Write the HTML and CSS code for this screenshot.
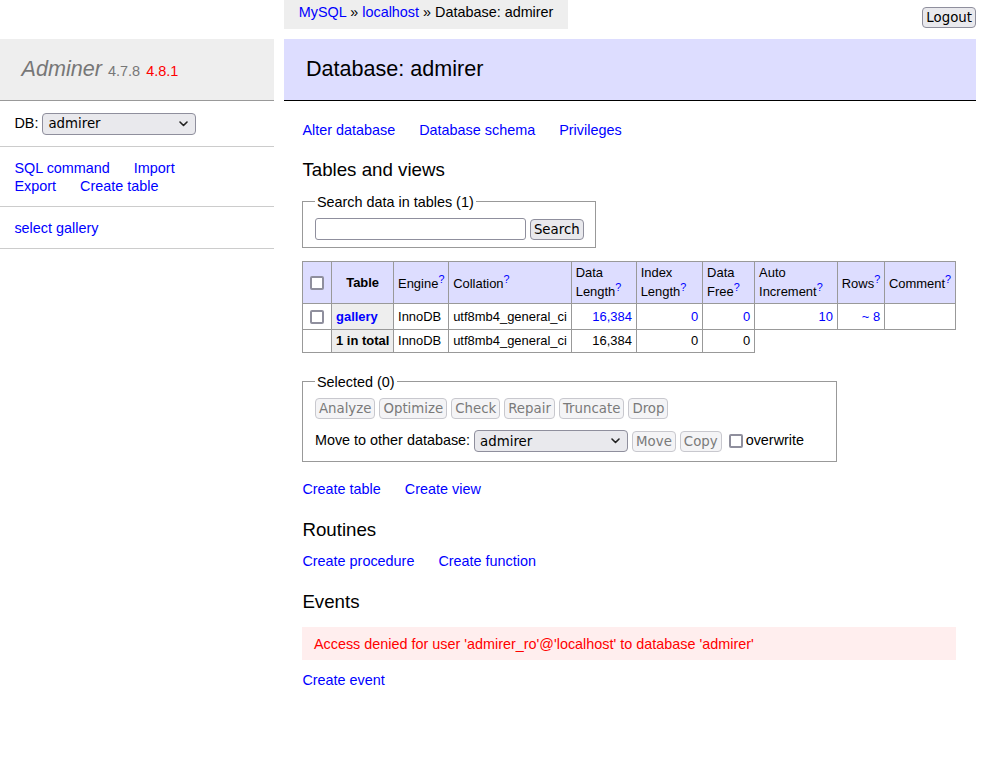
FILE: index.html
```html
<!DOCTYPE html>
<html lang="en">
<head>
<meta charset="utf-8">
<title>Database: admirer - Adminer</title>
<link rel="stylesheet" href="styles.css">
</head>
<body>
<div id="content">
<p id="breadcrumb"><a href="#">MySQL</a> &raquo; <a href="#">localhost</a> &raquo; Database: admirer</p>
<h2>Database: admirer</h2>
<p class="links"><a href="#">Alter database</a>
<a href="#">Database schema</a>
<a href="#">Privileges</a></p>
<h3>Tables and views</h3>
<form action="" method="post">
<fieldset><legend>Search data in tables <span>(1)</span></legend><div><input type="search" name="query" value=""> <input type="submit" value="Search"></div></fieldset>
<div class="scrollable">
<table class="nowrap checkable">
<thead><tr class="wrap"><td><input type="checkbox"></td><th>Table</th><td>Engine<sup><a href="#" class="help">?</a></sup></td><td>Collation<sup><a href="#" class="help">?</a></sup></td><td>Data Length<sup><a href="#" class="help">?</a></sup></td><td>Index Length<sup><a href="#" class="help">?</a></sup></td><td>Data Free<sup><a href="#" class="help">?</a></sup></td><td>Auto Increment<sup><a href="#" class="help">?</a></sup></td><td>Rows<sup><a href="#" class="help">?</a></sup></td><td>Comment<sup><a href="#" class="help">?</a></sup></td></tr></thead>
<tbody>
<tr><td><input type="checkbox"></td><th><a href="#">gallery</a></th><td>InnoDB</td><td>utf8mb4_general_ci</td><td class="number"><a href="#">16,384</a></td><td class="number"><a href="#">0</a></td><td class="number"><a href="#">0</a></td><td class="number"><a href="#">10</a></td><td class="number"><a href="#">~ 8</a></td><td></td></tr>
<tr><td></td><th>1 in total</th><td>InnoDB</td><td>utf8mb4_general_ci</td><td class="number">16,384</td><td class="number">0</td><td class="number">0</td></tr>
</tbody>
</table>
</div>
<div class="footer"><div>
<fieldset><legend>Selected <span>(0)</span></legend><div>
<input type="submit" value="Analyze" disabled> <input type="submit" value="Optimize" disabled> <input type="submit" value="Check" disabled> <input type="submit" value="Repair" disabled> <input type="submit" value="Truncate" disabled> <input type="submit" value="Drop" disabled>
<p class="move">Move to other database: <span class="sel"><select><option>admirer</option></select><svg class="chev" width="9" height="6" viewBox="0 0 9 6"><polyline points="1,1 4.5,4.5 8,1" fill="none" stroke="#222" stroke-width="1.6" stroke-linecap="round" stroke-linejoin="round"/></svg></span> <input type="submit" value="Move" disabled> <input type="submit" value="Copy" disabled> <label><input type="checkbox">overwrite</label></p>
</div></fieldset>
</div></div>
</form>
<p class="links"><a href="#">Create table</a>
<a href="#">Create view</a></p>
<h3>Routines</h3>
<p class="links"><a href="#">Create procedure</a>
<a href="#">Create function</a></p>
<h3>Events</h3>
<div class="error">Access denied for user 'admirer_ro'@'localhost' to database 'admirer'</div>
<p class="links"><a href="#">Create event</a></p>
</div>

<form action="" method="post">
<p class="logout"><input type="submit" value="Logout"></p>
</form>

<div id="menu">
<h1><a href="#" id="h1">Adminer</a> <span class="version">4.7.8</span> <a href="#" id="version">4.8.1</a></h1>
<form action=""><p id="dbs">DB: <span class="sel"><select><option>admirer</option></select><svg class="chev" width="9" height="6" viewBox="0 0 9 6"><polyline points="1,1 4.5,4.5 8,1" fill="none" stroke="#222" stroke-width="1.6" stroke-linecap="round" stroke-linejoin="round"/></svg></span></p></form>
<p class="links"><a href="#">SQL command</a>
<a href="#">Import</a>
<a href="#">Export</a>
<a href="#">Create table</a></p>
<ul id="tables"><li><a href="#">select</a> <a href="#">gallery</a></li></ul>
</div>
</body>
</html>
```

FILE: styles.css
```css
body {
  color: #000;
  background: #fff;
  font: 90%/1.25 "Liberation Sans", Arial, Helvetica, sans-serif;
  margin: 0;
}
a { color: blue; text-decoration: none; }
h1 {
  font-size: 150%;
  margin: 0;
  padding: .8em 1em;
  border-bottom: 1px solid #999;
  font-weight: normal;
  color: #777;
  background: #eee;
}
h2 {
  font-size: 150%;
  margin: 0 0 20px -18px;
  padding: .8em 1em;
  border-bottom: 1px solid #000;
  color: #000;
  font-weight: normal;
  background: #ddf;
}
h3 { font-weight: normal; font-size: 130%; margin: 1em 0 0; }
form ~ h3 { margin-top: calc(1em + 1px); }
form ~ h3 + .links { margin-top: calc(.8em - 1px); }
form { margin: 0; }
table { margin: 1em 20px 0 0; border-collapse: collapse; font-size: 90%; }
td, th { border: 1px solid #999; padding: .2em .3em; }
th { background: #eee; text-align: left; }
thead th { text-align: center; padding: .2em .5em; }
thead td, thead th { background: #ddf; }
fieldset {
  display: inline;
  vertical-align: top;
  padding: .5em .8em;
  margin: .8em .5em 0 0;
  border: 1px solid #999;
}
p { margin: .8em 20px 0 0; }

/* form controls (Firefox-like look) */
input, select {
  vertical-align: middle;
  font: 13.33px "DejaVu Sans", sans-serif;
}
input[type="submit"] {
  appearance: none;
  background: #e9e9ed;
  border: 1px solid #8f8f9d;
  border-radius: 4px;
  color: #000;
  padding: 2px 3px;
  margin: 0;
}
input[type="submit"]:disabled {
  background: #f4f4f6;
  border-color: #c8c8ce;
  color: #7a7a7a;
}
input[type="search"] {
  appearance: none;
  box-sizing: border-box;
  width: 211px;
  height: 22px;
  border: 1px solid #8f8f9d;
  border-radius: 3px;
  background: #fff;
  padding: 1px 3px;
  margin: 0;
}
input[type="checkbox"] {
  appearance: none;
  box-sizing: border-box;
  width: 14px;
  height: 14px;
  border: 2px solid #8f8f9d;
  border-radius: 2px;
  background: #fff;
  margin: 3px;
}
.sel {
  position: relative;
  display: inline-block;
  vertical-align: middle;
}
.sel select {
  appearance: none;
  box-sizing: border-box;
  width: 154px;
  height: 22px;
  background: #e9e9ed;
  border: 1px solid #8f8f9d;
  border-radius: 4px;
  color: #000;
  padding: 1px 20px 1px 5px;
  margin: 0;
  display: block;
}
.chev {
  position: absolute;
  right: 8px;
  top: 8px;
  pointer-events: none;
}

.version { color: #777; font-size: 67%; }
.nowrap td, .nowrap th { white-space: pre; }
.wrap td { white-space: normal; }
.error {
  color: red;
  background: #fee;
  padding: .5em .8em;
  margin: 1em 20px 0 0;
}
.number { text-align: right; }
.help { cursor: help; }
.footer {
  position: sticky;
  bottom: 0;
  margin-right: -20px;
  border-top: 20px solid rgba(255, 255, 255, .7);
  border-image: linear-gradient(rgba(255, 255, 255, .2), #fff) 100% 0;
}
.footer > div { background: #fff; padding: 0 0 .5em; }
.footer fieldset { margin-top: 0; padding-bottom: calc(.5em + 1px); }
.links a { white-space: nowrap; margin-right: 20px; }
.logout { margin-top: .5em; position: absolute; top: 0; right: 0; }
#menu {
  position: absolute;
  margin: 10px 0 0;
  padding: 0 0 30px 0;
  top: 2em;
  left: 0;
  width: 19em;
}
#menu p, #tables { padding: .8em 1em; margin: 0; border-bottom: 1px solid #ccc; }
#tables li { list-style: none; }
#dbs { overflow: hidden; }
#tables { white-space: nowrap; overflow: auto; }
#content { margin: 2em 0 0 21em; padding: 10px 20px 20px 0; }
#breadcrumb {
  white-space: nowrap;
  position: absolute;
  top: 0;
  left: 21em;
  background: #eee;
  height: 2em;
  line-height: 1.8em;
  padding: 0 1em;
  margin: 0 0 0 -18px;
}
#h1 { color: #777; text-decoration: none; font-style: italic; }
#version { font-size: 67%; color: red; }
```
